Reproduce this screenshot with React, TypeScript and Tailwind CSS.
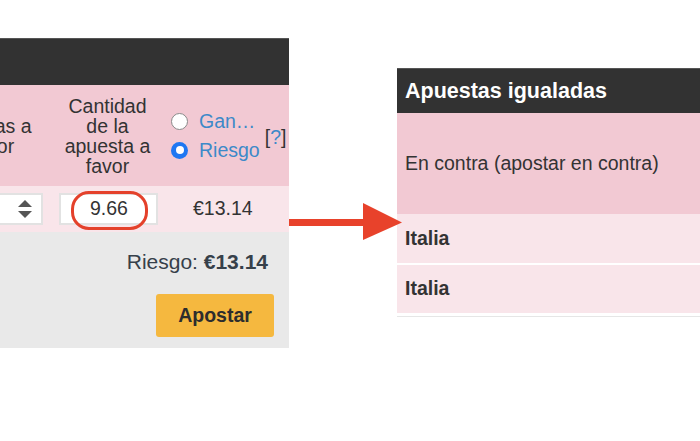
import React from 'react';

const font = { fontFamily: '"Liberation Sans", Arial, sans-serif' };

const Spinner: React.FC = () => (
  <svg width="16" height="22" viewBox="0 0 16 22" className="block">
    <path d="M8 2 L15 9 L1 9 Z" fill="#555" />
    <path d="M8 20 L15 13 L1 13 Z" fill="#555" />
  </svg>
);

const Arrow: React.FC = () => (
  <svg width="115" height="40" viewBox="0 0 115 40" className="absolute left-[289px] top-[202px]">
    <rect x="0" y="17" width="76" height="7" fill="#e8422b" />
    <path d="M74 1 L113 20.5 L74 38 Z" fill="#e8422b" />
  </svg>
);

const BetSlip: React.FC = () => (
  <div className="mt-[38px] w-[289px] shrink-0 overflow-hidden">
    <div className="h-[47px] bg-[#323232] border-t border-[#555]" />
    <div className="ml-[-65px] flex h-[101px] items-center bg-[#f2c9d3] text-[19.5px] leading-[20px] text-[#333]">
      <div className="w-[115px] shrink-0 px-[5px] text-center">Cuotas a favor</div>
      <div className="w-[115px] shrink-0 px-[10px] text-center">Cantidad de la apuesta a favor</div>
      <div className="flex items-center pl-[6px]">
        <div className="flex flex-col gap-[9px]">
          <label className="flex items-center gap-[11px]">
            <span className="h-[17px] w-[17px] rounded-full border border-[#8a8a8a] bg-white" />
            <span className="text-[#3d89c9]">Gan…</span>
          </label>
          <label className="flex items-center gap-[11px]">
            <span className="flex h-[17px] w-[17px] items-center justify-center rounded-full bg-[#1f77f2]">
              <span className="h-[8px] w-[8px] rounded-full bg-white" />
            </span>
            <span className="text-[#3d89c9]">Riesgo</span>
          </label>
        </div>
        <span className="ml-[5px] mt-[2px] text-[#333]">
          [<span className="text-[#3d89c9]">?</span>]
        </span>
      </div>
    </div>
    <div className="ml-[-65px] flex h-[46px] items-center bg-[#f9e5ea] text-[19.5px] text-[#333]">
      <div className="w-[115px] shrink-0 pl-[5px] pr-[7px]">
        <div className="flex h-[32px] items-center justify-end border-2 border-[#e2e2e2] bg-white pr-[8px]">
          <Spinner />
        </div>
      </div>
      <div className="w-[115px] shrink-0 pl-[9px] pr-[7px]">
        <div className="relative flex h-[32px] items-center justify-center border-2 border-[#e2e2e2] bg-white">
          <span className="pl-[1px]">9.66</span>
          <span className="absolute left-[10px] top-[-4px] h-[39px] w-[77px] rounded-[18px] border-[3px] border-[#e4412b]" />
        </div>
      </div>
      <div className="w-[124px] shrink-0 pl-[28px]">€13.14</div>
    </div>
    <div className="flex h-[116px] flex-col items-end bg-[#e9e9e9] pr-[15px] pt-[18px] text-[19.5px] text-[#36404a]">
      <div className="mr-[6px] text-[21px] leading-[24px]">
        Riesgo: <span className="font-bold">€13.14</span>
      </div>
      <button className="mt-[20px] h-[43px] w-[118px] rounded-[3px] bg-[#f5b83f] font-bold text-[#2d2d2d]">
        Apostar
      </button>
    </div>
  </div>
);

const Matched: React.FC = () => (
  <div className="mt-[68px] flex-1 text-[19.5px] text-[#333]">
    <div className="flex h-[45px] items-center border-t border-[#555] bg-[#323232] pl-[8px] text-[21.5px] font-bold text-white">
      Apuestas igualadas
    </div>
    <div className="flex h-[101px] items-center bg-[#f2c9d3] pl-[8px]">En contra (apostar en contra)</div>
    <div className="flex h-[49px] items-center bg-[#f9e5ea] pl-[8px] font-bold">Italia</div>
    <div className="mt-[2px] flex h-[48px] items-center bg-[#f9e5ea] pl-[8px] font-bold">Italia</div>
    <div className="mt-[3px] h-[1px] bg-[#e6e6e6]" />
  </div>
);

export default function App() {
  return (
    <div className="relative flex h-[441px] w-[700px] items-start overflow-hidden bg-white" style={font}>
      <BetSlip />
      <div className="w-[108px] shrink-0" />
      <Matched />
      <Arrow />
    </div>
  );
}
